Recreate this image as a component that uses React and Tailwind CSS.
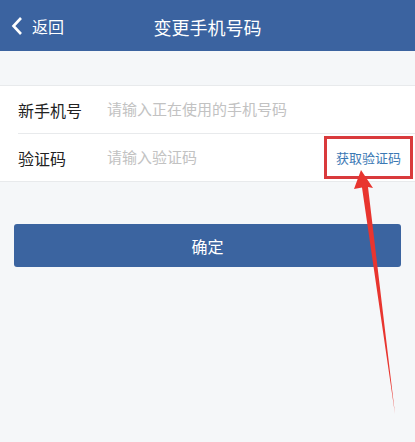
import React from "react";

const App = () => {
  return (
    <div
      className="relative w-[415px] h-[442px] overflow-hidden bg-[#f5f7f9]"
      style={{ fontFamily: '"Noto Sans CJK SC", "Liberation Sans", sans-serif' }}
    >
      <div className="h-[51px] bg-[#3b63a0] flex items-center relative">
        <div className="flex items-center pl-[11px] gap-[9px] text-white">
          <svg width="12" height="20" viewBox="0 0 12 20">
            <path d="M10 2 L2.5 10 L10 18" fill="none" stroke="#fff" strokeWidth="2.6" />
          </svg>
          <span className="text-[16px]">返回</span>
        </div>
        <p className="absolute left-0 right-0 text-center text-white text-[18px] pt-[3px]">变更手机号码</p>
      </div>

      <div className="mt-[34px] bg-white border-t border-b border-[#e8eaec]">
        <div className="flex items-center h-[48px] ml-[18px] border-b border-[#e8eaec]">
          <span className="w-[89px] text-[16px] text-[#222]">新手机号</span>
          <span className="text-[15px] text-[#c2c2c2]">请输入正在使用的手机号码</span>
        </div>
        <div className="flex items-center h-[47px] ml-[18px] pr-[14px]">
          <span className="w-[89px] text-[16px] text-[#222]">验证码</span>
          <span className="flex-1 text-[15px] text-[#c2c2c2]">请输入验证码</span>
          <span className="text-[13px] text-[#3b78b4] outline-[3px] outline-[#d93a3c] outline outline-offset-[9px]">
            获取验证码
          </span>
        </div>
      </div>

      <div className="px-[14px] mt-[42px]">
        <div className="h-[43px] rounded-[3px] bg-[#3b64a0] flex items-center justify-center text-white text-[16px]">
          确定
        </div>
      </div>

      <svg className="absolute left-0 top-0" width="415" height="442" viewBox="0 0 415 442">
        <path d="M361 170 L373 188 L368 187 L395 414 L362 187.5 L354 189 Z" fill="#e8352f" />
      </svg>
    </div>
  );
};

export default App;
